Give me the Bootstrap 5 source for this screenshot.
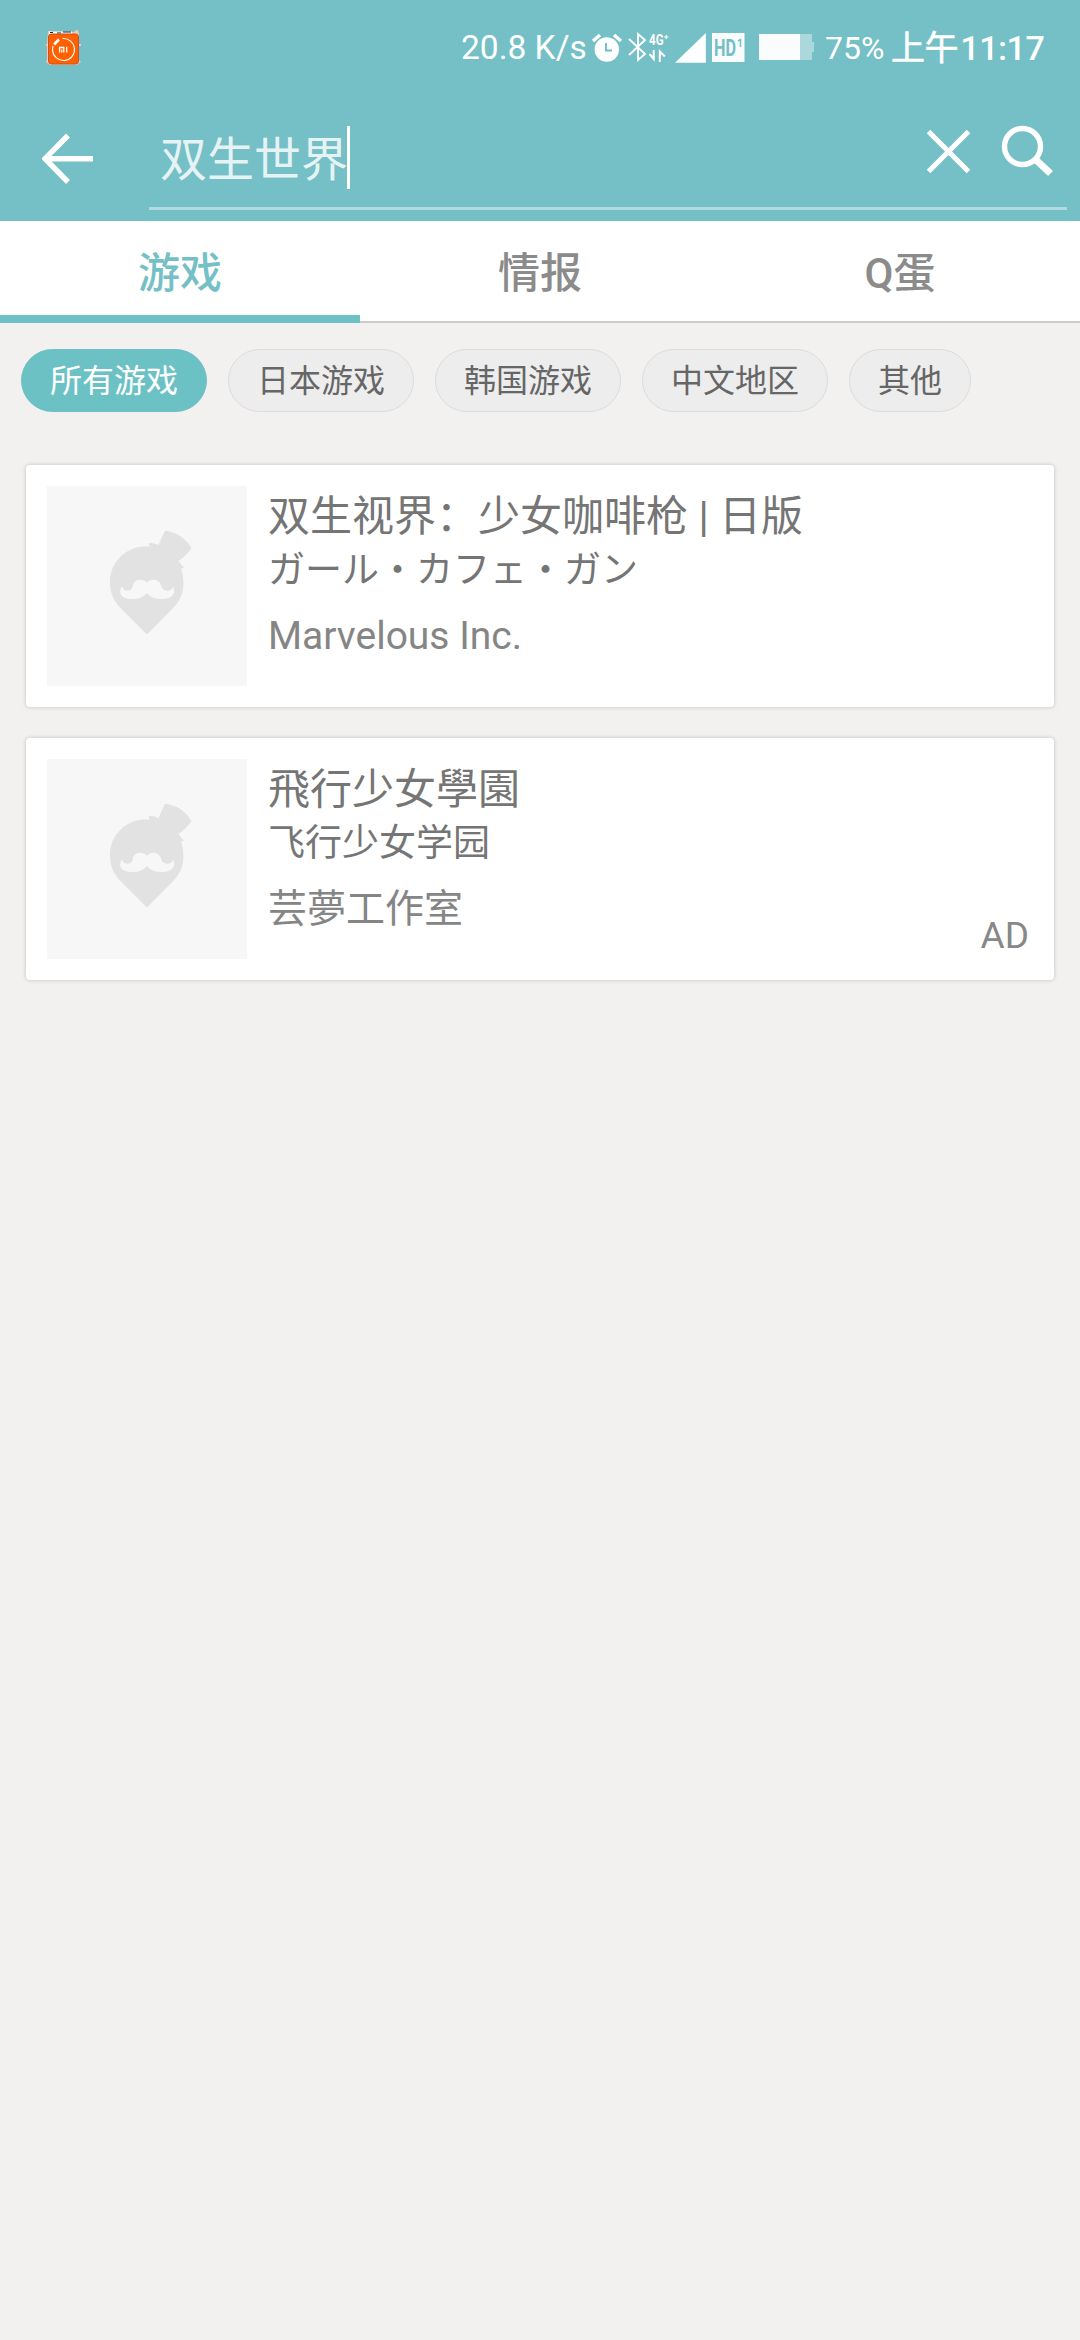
<!DOCTYPE html>
<html lang="zh-CN">
<head>
<meta charset="utf-8">
<meta name="viewport" content="width=device-width, initial-scale=1">
<title>双生世界</title>
<link href="https://cdn.jsdelivr.net/npm/bootstrap@5.3.0/dist/css/bootstrap.min.css" rel="stylesheet">
<style>
  html, body { height: 2340px; overflow: hidden; }
  body { background: #f3f1f0; font-family: Roboto, "Noto Sans CJK SC", sans-serif; }
  svg { display: block; flex: none; }
  .app-top { background: #75bfc6; height: 221px; color: #fff; }
  .status-row { height: 95px; padding: 0 37px 0 46px; line-height: 40px; }
  .net-speed { font-size: 33.5px; width: 130px; white-space: nowrap; }
  .status-icons { margin-right: 11px; }
  .batt-text { font-size: 32px; width: 66px; padding-top: 1px; }
  .clock-text { font-size: 34px; font-weight: 500; white-space: nowrap; width: 152px; letter-spacing: -.4px; }
  .clock-cjk { -webkit-text-stroke: .6px #fff; font-weight: 400; margin-right: 2px; }
  .search-row { height: 126px; padding: 0 13px 11px 42px; }
  .search-field { margin-left: 56px; border-bottom: 3px solid #b2dbdf; height: 115px; padding: 0 10px 0 11px; font-size: 47px; color: #e6f3f4; line-height: 60px; }
  .query-text { padding-top: 17px; }
  .caret { width: 3px; height: 63px; background: #fff; margin-top: 13px; margin-left: -1px; }
  .tab-row { height: 102px; background: #fff; border-bottom: 2px solid #ccc; }
  .tab-item { font-size: 42px; font-weight: 500; color: #8b8b8b; height: 102px; padding: 7px 0 0; border: 0; border-bottom: 8px solid transparent; border-radius: 0; line-height: 92px; text-align: center; }
  .tab-item.active { color: #75bfc6; border-bottom-color: #6cc1c5; }
  .chip-row { gap: 21px; padding: 26px 21px 0; }
  .chip { height: 63px; padding: 0 28px; border: 1px solid #dcdcdc; background: #ededed; color: #666; font-size: 32px; line-height: 62px; white-space: nowrap; }
  .chip.active { background: #6cc1c5; border-color: #6cc1c5; color: #fff; }
  .result-list { padding: 53px 26px 0; gap: 31px; }
  .result-card { height: 242px; padding: 21px; border: 0; border-radius: 4px; box-shadow: 0 0 4px rgba(0,0,0,.2); color: #757575; }
  .thumb { width: 200px; height: 200px; background: #f7f7f7; flex: none; }
  .game-info { margin-left: 21px; padding-top: 2px; white-space: nowrap; }
  .game-title { font-size: 42px; line-height: 58px; }
  .game-alias { font-size: 37px; line-height: 50px; }
  .alias-ja { font-family: "Noto Sans CJK JP", sans-serif; line-height: 42px; padding-bottom: 8px; }
  .game-maker { font-size: 39px; line-height: 54px; margin-top: 13px; color: #858585; }
  .ad-label { font-size: 37px; line-height: 46px; color: #888; margin-right: 4px; }
</style>
</head>
<body>
<svg width="0" height="0" class="position-absolute" aria-hidden="true">
  <symbol id="logo" viewBox="0 0 200 200">
    <path fill="#e2e2e2" d="M100 148.500 71.500 120C66 113 63 106 63 96C63 76 79 61 97 60.500L103 60.500Q101 58.500 102 56.700Q108 57 111.500 59L117.500 45.500Q118.500 44.500 121 45Q137 49 144.500 62Q140 69 131.500 75Q134 79 137 81.500L134 82.700Q136.500 90 136.500 97C136.500 107 133 114 128 120Z"/>
    <path fill="#f7f7f7" d="M100 97C96 91.500 86 93 85.500 101C85 106 76 106 75 100.500C70 108 76 113.500 86 113C94 112.500 96 111 100 107C104 111 106 112.500 114 113C124 113.500 130 108 126 100.500C125 106 116 106 114.500 101C113 93 104 91.500 100 97Z"/>
  </symbol>
</svg>

<header class="app-top">
  <div class="status-row d-flex align-items-center">
    <svg width="36" height="37" viewBox="0 0 36 37" class="me-auto">
      <path fill="#f8c6b0" d="M2 2h3l1 1h22l2-2h2l1 4v10h2v2h-2v14l2 2-3 2-1 1H4l-4-3 1-3V17H0v-2h1z"/>
      <path fill="#fff" d="M3 2.500h23v3H3z"/><path stroke="#222" stroke-width="1" d="M4 3.500h3M11 4h4M17 3h8"/>
      <rect x="2.500" y="5" width="30" height="30" rx="3" fill="#ff6100" stroke="#c9512c"/>
      <circle cx="17.500" cy="20.500" r="11" fill="none" stroke="#fff" stroke-width="1.100" stroke-dasharray="56 13.100" transform="rotate(-95 17.500 20.500)"/>
      <path stroke="#fff" stroke-width="2.600" d="M8 15.500 13 10.500"/>
      <path fill="none" stroke="#fff" stroke-width="1.300" d="M13.600 23.500v-5h4.200v5M15.800 20.500v3M20.700 17.800v5.700"/>
    </svg>
    <span class="net-speed">20.8 K/s</span>
    <svg class="status-icons" width="223" height="34" viewBox="590 31 223 34">
      <circle cx="605.800" cy="49.500" r="12.200" fill="#fff"/>
      <path d="M592 41l7-6M613 35l7 6" stroke="#fff" stroke-width="3.400"/>
      <path d="M605 43v7.500h6" fill="none" stroke="#75bfc6" stroke-width="2"/>
      <path d="M628 39l16 15-7 6V34l7 6-16 15" fill="none" stroke="#fff" stroke-width="1.900"/>
      <text x="648" y="44.500" font-size="14" font-weight="700" fill="#fff" textLength="14.500" lengthAdjust="spacingAndGlyphs">4G</text>
      <path d="M663 37h4.500M665.200 34.800v4.500" stroke="#fff" stroke-width="1.100"/>
      <path d="M648.500 54l4.200 5V50M658.800 62V51.500l5 5" fill="none" stroke="#fff" stroke-width="2"/>
      <path d="M674 62.700 704.800 33v29.700z" fill="#fff"/>
      <path d="M711 33h32.500v29H711z" fill="#fff" fill-opacity=".95"/>
      <text x="713" y="55.700" font-size="23" font-weight="700" fill="#75bfc6" textLength="22" lengthAdjust="spacingAndGlyphs">HD</text>
      <path d="M737 41l2.500-1.500V47" fill="none" stroke="#75bfc6" stroke-width="1.500"/>
      <path d="M758 34h41v26h-41z" fill="#fafcfe"/>
      <path d="M799 34h12v8h2v10h-2v8h-12z" fill="#acd8dd"/>
    </svg>
    <span class="batt-text">75%</span>
    <span class="clock-text"><span class="clock-cjk">上午</span>11:17</span>
  </div>
  <div class="search-row d-flex">
    <svg width="51" height="115" viewBox="42 95 51 115"><path d="M93 158.700H46M68 135.500 45 158.700 68 182" fill="none" stroke="#fff" stroke-width="5.400"/></svg>
    <div class="search-field d-flex flex-grow-1 align-items-center">
      <span class="query-text">双生世界</span><span class="caret"></span>
      <svg class="ms-auto" width="130" height="112" viewBox="927 95 130 112"><path d="M928.500 131.500 968.500 171.500M968.500 131.500 928.500 171.500" stroke="#fff" stroke-width="5"/><circle cx="1022.500" cy="146.500" r="18" fill="none" stroke="#fff" stroke-width="5.400"/><path d="M1035 159 1050.500 173.500" stroke="#fff" stroke-width="7"/></svg>
    </div>
  </div>
</header>

<nav class="tab-row nav nav-justified flex-nowrap">
  <a class="tab-item nav-link active">游戏</a>
  <a class="tab-item nav-link">情报</a>
  <a class="tab-item nav-link">Q蛋</a>
</nav>

<main>
  <div class="chip-row d-flex">
    <span class="chip active rounded-pill">所有游戏</span>
    <span class="chip rounded-pill">日本游戏</span>
    <span class="chip rounded-pill">韩国游戏</span>
    <span class="chip rounded-pill">中文地区</span>
    <span class="chip rounded-pill">其他</span>
  </div>
  <div class="result-list d-flex flex-column">
    <article class="result-card card flex-row">
      <svg class="thumb"><use href="#logo"/></svg>
      <div class="game-info">
        <div class="game-title">双生视界：少女咖啡枪 | 日版</div>
        <div class="game-alias alias-ja" lang="ja">ガール・カフェ・ガン</div>
        <div class="game-maker">Marvelous Inc.</div>
      </div>
    </article>
    <article class="result-card card flex-row">
      <svg class="thumb"><use href="#logo"/></svg>
      <div class="game-info flex-grow-1">
        <div class="game-title">飛行少女學園</div>
        <div class="game-alias">飞行少女学园</div>
        <div class="game-maker">芸夢工作室</div>
      </div>
      <span class="ad-label align-self-end">AD</span>
    </article>
  </div>
</main>
<script src="https://cdn.jsdelivr.net/npm/bootstrap@5.3.0/dist/js/bootstrap.bundle.min.js"></script>
</body>
</html>
